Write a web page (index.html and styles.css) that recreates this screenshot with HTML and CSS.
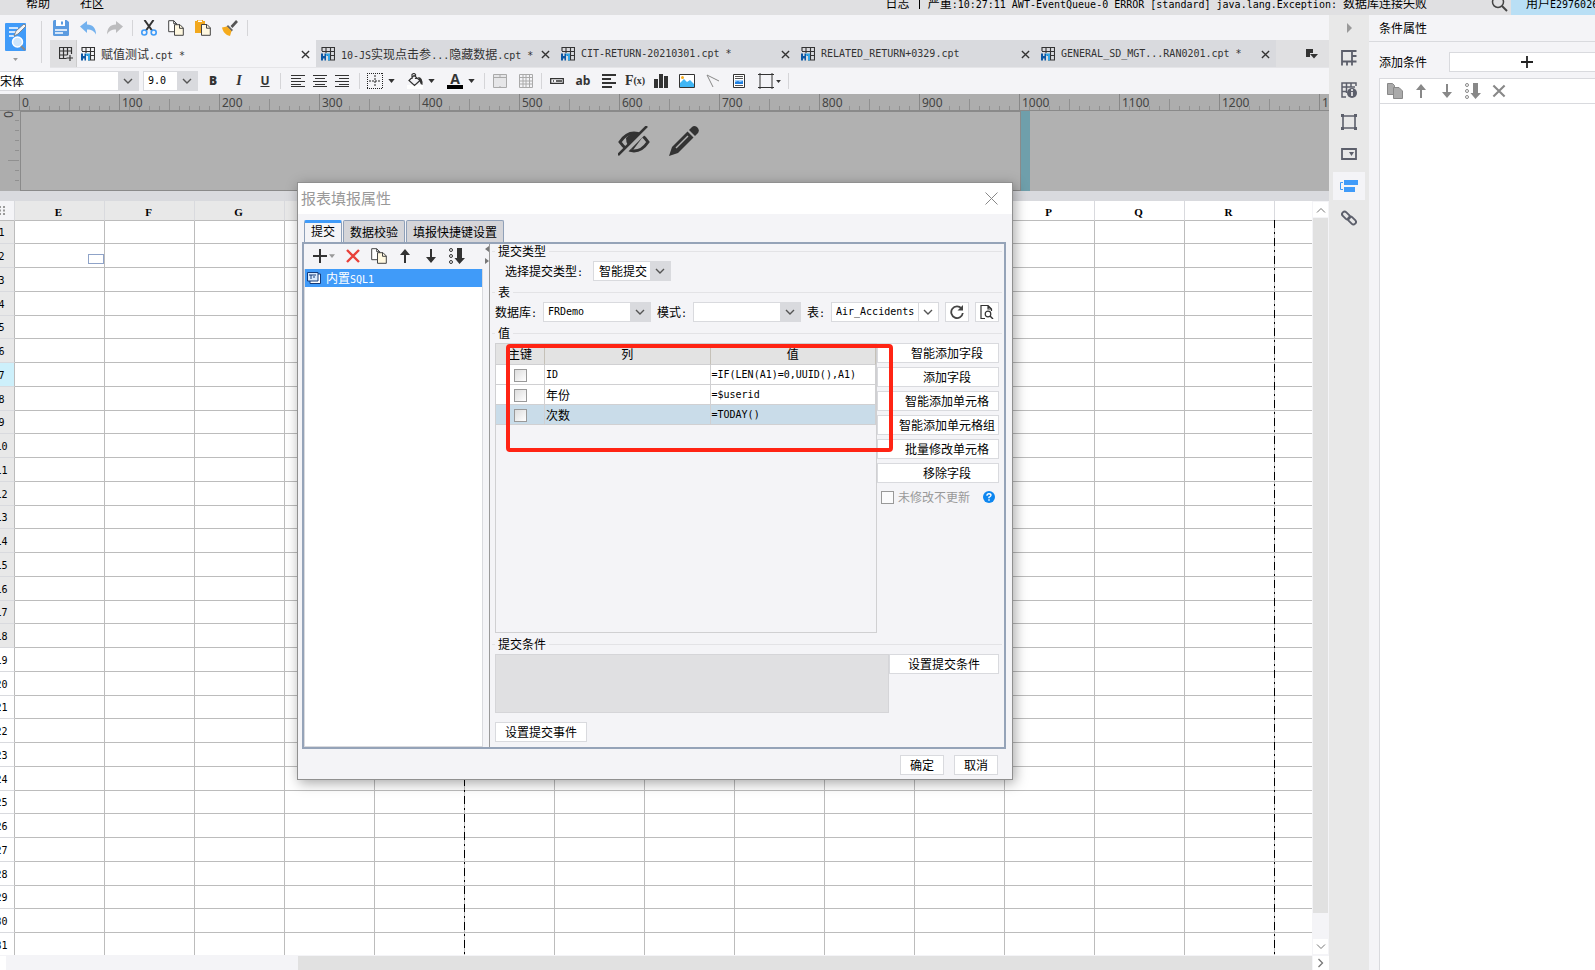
FILE: index.html
```html
<!DOCTYPE html>
<html lang="zh-CN">
<head>
  <meta charset="UTF-8">
  <meta name="viewport" content="width=device-width, initial-scale=1.0">
  <title>报表设计器</title>
  <link rel="stylesheet" href="styles.css">
</head>

<body>

  <!-- shared icons -->
  <svg class="defs" width="0" height="0">
    <symbol id="i-cpt" viewBox="0 0 14 14">
      <path d="M1 4V.5h12.500v12.500H7M1 4.500h12.500M5 .5V6M9.500 .5V13M6 8.500h7.500" fill="none" stroke="#333" stroke-width="1.100"/>
      <path d="M0 6.500h2v2.500h1.500V6.500h1.500v7H3.500v-2H2v2H0z" fill="#0b57a4"/>
      <path d="M5 6.500h4v7H7V8.700H5z" fill="#35a6e6"/>
    </symbol>
    <symbol id="i-x" viewBox="0 0 10 10"><path d="M1 1l8 8M9 1L1 9" fill="none" stroke="currentColor" stroke-width="1.500"/></symbol>
    <symbol id="i-down" viewBox="0 0 8 5"><path d="M0 0h8L4 5z" fill="currentColor"/></symbol>
    <symbol id="i-copy" viewBox="0 0 16 16">
      <path d="M.7.7h5l3 3v8H.7z" fill="#fff" stroke="#444"/>
      <path d="M5.700.7v3h3" fill="none" stroke="#444"/>
      <path d="M6.500 4.700h5.500l3.300 3.300v7.300H6.500z" fill="#fff8e0" stroke="#444"/>
      <path d="M11.500 4.700v3.600h3.800" fill="none" stroke="#444"/>
    </symbol>
    <symbol id="i-up" viewBox="0 0 10 14"><path d="M5 0l5 6H6v8H4V6H0z" fill="currentColor"/></symbol>
    <symbol id="i-dn" viewBox="0 0 10 14"><path d="M5 14l5-6H6V0H4v8H0z" fill="currentColor"/></symbol>
    <symbol id="i-sort" viewBox="0 0 16 16">
      <g fill="none" stroke="currentColor"><circle cx="2" cy="2" r="1.500"/><circle cx="2" cy="8" r="1.500"/><circle cx="2" cy="14" r="1.500"/></g>
      <path d="M8 0h5v10h3l-5.500 6L5.500 10H8z" fill="currentColor"/>
    </symbol>
  </svg>

  <header class="menubar">
    <nav class="menu">
      <a href="#">帮助</a>
      <a href="#">社区</a>
    </nav>
    <div class="log">
      <span>日志</span>
      <span class="bar"></span>
      <span class="log-text">严重<span class="lat">:10:27:11 AWT-EventQueue-0 ERROR [standard] java.lang.Exception: </span>数据库连接失败</span>
    </div>
    <button class="search" aria-label="搜索">
      <svg width="17" height="17" viewBox="0 0 17 17"><circle cx="7" cy="7" r="5.500" fill="none" stroke="#444" stroke-width="1.500"/><path d="M11 11l5 5" stroke="#444" stroke-width="2"/></svg>
    </button>
    <div class="user">用户<span class="lat">E2976026</span></div>
  </header>

  <div class="workspace">
    <main class="designer">
      <div class="top">
        <button class="preview" aria-label="预览">
          <svg width="22" height="28" viewBox="0 0 22 28">
            <rect x="0" y="0" width="21" height="28" rx="1" fill="#409bf9"/>
            <path d="M4 5h9M4 9h7M4 13h5" stroke="#fff" stroke-width="1.500"/>
            <path d="M9 13l2-5 8-7 2 2-8 8z" fill="#f3f4f6" stroke="#777" stroke-width=".8"/>
            <circle cx="12.500" cy="19" r="5" fill="#cfe6fb" stroke="#fff" stroke-width="1.500"/>
            <path d="M16 23l4 4" stroke="#888" stroke-width="2"/>
          </svg>
          <svg class="tri" width="5" height="3"><use href="#i-down"/></svg>
        </button>

        <div class="top-rows">
          <div class="quick">
            <button aria-label="保存"><svg width="16" height="16" viewBox="0 0 16 16"><path d="M0 1.500Q0 0 1.500 0h12L16 2v12.500q0 1.500-1.500 1.500h-13Q0 16 0 14.500z" fill="#5b9be0"/><path d="M3 0h9v6H3z" fill="#fff"/><path d="M8 1.500h2v3H8z" fill="#5b9be0"/><path d="M2 10h12M2 13h8" stroke="#fff" stroke-width="1.300"/></svg></button>
            <button aria-label="撤销"><svg width="16" height="16" viewBox="0 0 16 16"><path d="M0 6.500L7 1v3.500c6 0 9 4 9 10-2-3.500-4-5-9-5V13z" fill="#73b1ee"/></svg></button>
            <button aria-label="重做"><svg width="16" height="16" viewBox="0 0 16 16"><path d="M16 6.500L9 1v3.500c-6 0-9 4-9 10 2-3.500 4-5 9-5V13z" fill="#bcbcbe"/></svg></button>
            <i class="sep"></i>
            <button aria-label="剪切"><svg width="16" height="16" viewBox="0 0 16 16"><path d="M3.500 0L11 10.500M12.500 0L5 10.500" stroke="#333" stroke-width="2"/><circle cx="3.300" cy="12.500" r="2.500" fill="none" stroke="#3f9bf7" stroke-width="1.600"/><circle cx="12.700" cy="12.500" r="2.500" fill="none" stroke="#3f9bf7" stroke-width="1.600"/></svg></button>
            <button aria-label="复制"><svg width="16" height="16"><use href="#i-copy"/></svg></button>
            <button aria-label="粘贴"><svg width="16" height="16" viewBox="0 0 16 16"><path d="M0 1h10v12H0z" fill="#f2a81d"/><path d="M2.500 0h5v2.500h-5z" fill="#fff" stroke="#f2a81d"/><path d="M6.500 4.500h5.500l3.300 3.300v7.500H6.500z" fill="#fff8e0" stroke="#444"/><path d="M11.500 4.500v3.700h3.800" fill="none" stroke="#444"/></svg></button>
            <button aria-label="格式刷"><svg width="16" height="16" viewBox="0 0 16 16"><path d="M15 1L9.500 7" stroke="#555" stroke-width="2.600"/><path d="M6 5l5 5-1.500 1.500-5-5z" fill="#666"/><path d="M0 7.500l5-1 4.500 4.500L8 16C3.500 15 1 12 0 7.500z" fill="#f6ab1c"/></svg></button>
            <i class="sep"></i>
          </div>

          <div class="tabs">
            <button class="tab-new" aria-label="新建"><svg width="14" height="14" viewBox="0 0 14 14"><path d="M7.500 11.500H.5V.5h12V7M.5 4h12M.5 8h8M4.500 .5v11M8.500 .5V8M7.500 11h6.500M11 8v6" fill="none" stroke="#333" stroke-width="1.200"/></svg></button>
            <div class="tab active"><svg width="14" height="14"><use href="#i-cpt"/></svg><span class="name">赋值测试<span class="lat">.cpt *</span></span><button aria-label="关闭"><svg width="9" height="9"><use href="#i-x"/></svg></button></div>
            <div class="tab"><svg width="14" height="14"><use href="#i-cpt"/></svg><span class="name"><span class="lat">10-JS</span>实现点击参<span class="lat">...</span>隐藏数据<span class="lat">.cpt *</span></span><button aria-label="关闭"><svg width="9" height="9"><use href="#i-x"/></svg></button></div>
            <div class="tab"><svg width="14" height="14"><use href="#i-cpt"/></svg><span class="name lat">CIT-RETURN-20210301.cpt *</span><button aria-label="关闭"><svg width="9" height="9"><use href="#i-x"/></svg></button></div>
            <div class="tab"><svg width="14" height="14"><use href="#i-cpt"/></svg><span class="name lat">RELATED_RETURN+0329.cpt</span><button aria-label="关闭"><svg width="9" height="9"><use href="#i-x"/></svg></button></div>
            <div class="tab"><svg width="14" height="14"><use href="#i-cpt"/></svg><span class="name lat">GENERAL_SD_MGT...RAN0201.cpt *</span><button aria-label="关闭"><svg width="9" height="9"><use href="#i-x"/></svg></button></div>
            <button class="tab-list" aria-label="全部标签"><svg width="12" height="10" viewBox="0 0 12 10"><path d="M0 0h7v4H4v4H0zM4 5h8L8 9.500z" fill="#333"/></svg></button>
          </div>
        </div>
      </div>

      <div class="format">
        <select class="combo font-name" aria-label="字体"><option>宋体</option></select>
        <select class="combo lat font-size" aria-label="字号"><option>9.0</option></select>
        <button class="bold" aria-label="加粗">B</button>
        <button class="italic" aria-label="倾斜">I</button>
        <button class="under" aria-label="下划线">U</button>
        <i class="sep"></i>
        <div class="aligns">
          <button aria-label="左对齐"><svg width="14" height="12" viewBox="0 0 14 12"><path d="M0 .5h14M0 3.500h10M0 6.500h14M0 9.500h10M0 11.500h14" stroke="#333"/></svg></button>
          <button aria-label="居中"><svg width="14" height="12" viewBox="0 0 14 12"><path d="M0 .5h14M2 3.500h10M0 6.500h14M2 9.500h10M0 11.500h14" stroke="#333"/></svg></button>
          <button aria-label="右对齐"><svg width="14" height="12" viewBox="0 0 14 12"><path d="M0 .5h14M4 3.500h10M0 6.500h14M4 9.500h10M0 11.500h14" stroke="#333"/></svg></button>
        </div>
        <i class="sep"></i>
        <button class="drop" aria-label="边框"><svg width="16" height="16" viewBox="0 0 16 16"><path d="M.5 0v16M15.500 0v16M0 .5h16M0 15.500h16" stroke="#222" stroke-dasharray="1 1"/><path d="M8 2v12M2 8h12" stroke="#222" stroke-dasharray="2 1"/></svg><svg width="7" height="4"><use href="#i-down"/></svg></button>
        <button class="drop" aria-label="填充"><svg width="16" height="16" viewBox="0 0 16 16"><path d="M0 12h16v4H0z" fill="#fff"/><path d="M7 2.500l6 5-5.500 5L2 7.500zM5 6V1.500q2-2 3.500 0V6" fill="none" stroke="#333" stroke-width="1.200"/><path d="M11 4q5 0 4.500 8-2.500-1-3-4z" fill="#333"/></svg><svg width="7" height="4"><use href="#i-down"/></svg></button>
        <button class="drop" aria-label="字体颜色"><span class="color-a">A</span><svg width="7" height="4"><use href="#i-down"/></svg></button>
        <i class="sep"></i>
        <button aria-label="合并"><svg width="14" height="14" viewBox="0 0 14 14"><path d="M.5.5h13v13H.5zM.5 3.500h13M7 .5v3M7 12v1.500" fill="#e6e6e8" stroke="#aaa"/></svg></button>
        <button aria-label="拆分"><svg width="14" height="14" viewBox="0 0 14 14"><path d="M.5.5h13v13H.5zM.5 3.500h13M.5 7h13M.5 10h13M4 .5v13M7 .5v13M10.500 .5v13" fill="none" stroke="#aaa"/></svg></button>
        <i class="sep"></i>
        <button aria-label="控件"><svg width="14" height="6" viewBox="0 0 14 6"><path d="M.7.7h12.600v4.600H.7zM3 3h1M6 3h6" fill="none" stroke="#333" stroke-width="1.300"/></svg></button>
        <button class="ab" aria-label="文本">ab</button>
        <button aria-label="富文本"><svg width="14" height="14" viewBox="0 0 14 14"><path d="M0 1h14M0 5h9M0 9h14M0 13h10" stroke="#333" stroke-width="2"/></svg></button>
        <button class="fx" aria-label="公式">F<small>(x)</small></button>
        <button aria-label="图表"><svg width="14" height="14" viewBox="0 0 14 14"><path d="M0 5h4v9H0zM5 0h4v14H5zM10 2h4v12h-4z" fill="#333"/></svg></button>
        <button aria-label="图片"><svg width="16" height="14" viewBox="0 0 16 14"><path d="M.5.5h15v13H.5z" fill="#fff" stroke="#333"/><path d="M1 13V9l4-4 3 3 3-2 4 4v3z" fill="#3fb6f5"/><circle cx="3.500" cy="3.500" r="1.500" fill="#f6ab1c"/></svg></button>
        <button aria-label="斜线"><svg width="14" height="14" viewBox="0 0 14 14"><path d="M13 7L1 1l6 12" fill="none" stroke="#888"/></svg></button>
        <button aria-label="子报表"><svg width="12" height="14" viewBox="0 0 12 14"><path d="M.5.5h11v13H.5z" fill="#fff" stroke="#333"/><path d="M2 2.500h8M2 4.500h8M2 11.500h8" stroke="#555"/><path d="M2 6h8v4H2z" fill="#9fd0fb"/><path d="M2 10V8l3-1 2 1 3-1v3z" fill="#1f7fe0"/></svg></button>
        <button class="shape" aria-label="形状"><svg width="16" height="16" viewBox="0 0 16 16"><path d="M2 0v16M14 0v16M0 1.500h16M0 14.500h16" stroke="#333"/></svg><svg width="5" height="3"><use href="#i-down"/></svg></button>
        <i class="sep"></i>
      </div>

      <div class="ruler-top" id="ruler"></div>

      <div class="param">
        <div class="ruler-left"><span>0</span></div>
        <div class="canvas">
          <svg width="32" height="30" viewBox="0 0 32 30"><path d="M2 16Q8 7 16 7t14 9q-6 9-14 9T2 16z" fill="none" stroke="#333" stroke-width="3"/><path d="M8 12q8-9 16 0l-9 12q-7-4-7-12z" fill="#333"/><path d="M2 31L33 0" stroke="#b1b1b1" stroke-width="4"/><path d="M0 29L29 0" stroke="#333" stroke-width="2.500"/></svg>
          <svg width="30" height="30" viewBox="0 0 30 30"><path d="M20 4l6 6 3-3q2-3-1-6-3-2-5 0z" fill="#333"/><path d="M18.500 5.500l6 6L9 27l-9 3 3-9z" fill="#333"/><path d="M7 22L19 10" stroke="#b1b1b1" stroke-width="1.500"/></svg>
        </div>
        <div class="drag"></div>
      </div>
      <div class="splitter"></div>

      <div class="sheet-area">
        <div class="sheet">
          <table class="grid" id="grid"></table>
          <span class="cell-mark"></span>
          <span class="page-line first"></span>
          <span class="page-line second"></span>
        </div>
        <div class="vscroll">
          <button aria-label="向上"><svg width="10" height="6" viewBox="0 0 10 6"><path d="M1 5.500l4-4 4 4" fill="none" stroke="#777"/></svg></button>
          <div class="thumb"></div>
          <button aria-label="向下"><svg width="10" height="6" viewBox="0 0 10 6"><path d="M1 .5l4 4 4-4" fill="none" stroke="#777"/></svg></button>
        </div>
      </div>
      <div class="hscroll">
        <button class="left" aria-label="向左"></button>
        <div class="thumb"></div>
        <button aria-label="向右"><svg width="6" height="10" viewBox="0 0 6 10"><path d="M.5 1l4 4-4 4" fill="none" stroke="#777" stroke-width="1.300"/></svg></button>
      </div>
    </main>

    <nav class="strip">
      <button aria-label="收起"><svg width="6" height="10" viewBox="0 0 6 10"><path d="M1 0l5 5-5 5z" fill="#999"/></svg></button>
      <button aria-label="单元格元素"><svg width="16" height="16" viewBox="0 0 16 16"><path d="M1 15.500V1h14.500M1 11.500h14.500M11 1v14.500M11 6h4.500M6 11.500v4" fill="none" stroke="#5c5f6b" stroke-width="1.800"/></svg></button>
      <button aria-label="单元格属性"><svg width="16" height="16" viewBox="0 0 16 16"><path d="M5 15H1V1h14v3M1 5h13M1 9.500h5M5.500 1v10M10 1v4" fill="none" stroke="#5c5f6b" stroke-width="1.500"/><circle cx="11" cy="11" r="5" fill="#5c5f6b"/><path d="M11 7v2M11 10v4" stroke="#fff" stroke-width="1.500"/></svg></button>
      <button aria-label="悬浮元素"><svg width="16" height="16" viewBox="0 0 16 16"><path d="M2 2h12v12H2z" fill="none" stroke="#5c5f6b" stroke-width="1.600"/><path d="M0 0h3v3H0zM13 0h3v3h-3zM0 13h3v3H0zM13 13h3v3h-3z" fill="#5c5f6b"/></svg></button>
      <button aria-label="控件设置"><svg width="16" height="12" viewBox="0 0 16 12"><path d="M1 1h14v10H1z" fill="none" stroke="#5c5f6b" stroke-width="1.800"/><path d="M8 4h5l-2.500 4z" fill="#5c5f6b"/></svg></button>
      <button class="on" aria-label="条件属性"><svg width="18" height="12" viewBox="0 0 18 12"><path d="M4 0h14v5H4zM4 7h11v5H4z" fill="#409bf9"/><path d="M3 2.500H.5v7H3" fill="none" stroke="#409bf9"/></svg></button>
      <button aria-label="超级链接"><svg width="16" height="16" viewBox="0 0 16 16"><g fill="none" stroke="#5c5f6b" stroke-width="1.900"><rect x="0.500" y="3" width="9" height="5" rx="2.500" transform="rotate(45 5 5.500)"/><rect x="6.500" y="8" width="9" height="5" rx="2.500" transform="rotate(45 11 10.500)"/></g></svg></button>
    </nav>

    <aside class="panel">
      <h2>条件属性</h2>
      <div class="panel-row">
        <span>添加条件</span>
        <button aria-label="添加条件"><svg width="12" height="12" viewBox="0 0 12 12"><path d="M6 0v12M0 6h12" stroke="#222" stroke-width="1.800"/></svg></button>
      </div>
      <div class="cond-list">
        <div class="cond-tools">
          <button aria-label="复制"><svg width="16" height="16" viewBox="0 0 16 16"><path d="M.5.5h5l2 2v9h-7z" fill="#aaa" stroke="#888"/><path d="M6.500 4.500h5.500l3.500 3.500v7.500h-9z" fill="#aaa" stroke="#888"/></svg></button>
          <button aria-label="上移"><svg width="10" height="14"><use href="#i-up"/></svg></button>
          <button aria-label="下移"><svg width="10" height="14"><use href="#i-dn"/></svg></button>
          <button aria-label="排序"><svg width="16" height="16"><use href="#i-sort"/></svg></button>
          <button aria-label="删除"><svg width="14" height="14"><use href="#i-x"/></svg></button>
        </div>
      </div>
    </aside>
  </div>

  <section class="dialog" role="dialog" aria-labelledby="dialogTitle">
    <div class="dialog-title">
      <h1 id="dialogTitle">报表填报属性</h1>
      <button aria-label="关闭"><svg width="13" height="13" viewBox="0 0 13 13"><path d="M.5.5l12 12M12.500 .5l-12 12" stroke="#888"/></svg></button>
    </div>
    <div class="dialog-tabs">
      <button class="active">提交</button>
      <button>数据校验</button>
      <button>填报快捷键设置</button>
    </div>

    <div class="pane">
      <div class="side">
        <div class="side-tools">
          <button class="add" aria-label="添加"><svg width="14" height="14" viewBox="0 0 14 14"><path d="M7 0v14M0 7h14" stroke="#333" stroke-width="2"/></svg><svg class="tri" width="6" height="4"><use href="#i-down"/></svg></button>
          <button aria-label="删除"><svg width="14" height="14" viewBox="0 0 14 14"><path d="M1 1l12 12M13 1L1 13" stroke="#e8403a" stroke-width="2.400"/></svg></button>
          <button aria-label="复制"><svg width="16" height="16"><use href="#i-copy"/></svg></button>
          <button aria-label="上移"><svg width="10" height="14"><use href="#i-up"/></svg></button>
          <button aria-label="下移"><svg width="10" height="14"><use href="#i-dn"/></svg></button>
          <button aria-label="排序"><svg width="16" height="16"><use href="#i-sort"/></svg></button>
        </div>
        <ul class="submit-list">
          <li><svg width="14" height="12" viewBox="0 0 14 12"><path d="M3 2h10.500v9.500H3z" fill="#fff" stroke="#143a78"/><path d="M.5.5h10.500v8.500H.5z" fill="#d9eafc" stroke="#143a78"/><path d="M2 3h7M4 3v4M6 5h2" stroke="#143a78"/></svg><span>内置<span class="lat">SQL1</span></span></li>
        </ul>
      </div>
      <div class="split">
        <svg width="4" height="18" viewBox="0 0 4 18"><path d="M4 0v6L0 3zM0 12v6l4-3z" fill="#777"/></svg>
      </div>

      <form class="detail">
        <fieldset>
          <legend>提交类型</legend>
          <div class="row type-row">
            <label for="submitType">选择提交类型<span class="lat">:</span></label>
            <select class="combo" id="submitType"><option>智能提交</option></select>
          </div>
        </fieldset>

        <fieldset>
          <legend>表</legend>
          <div class="row">
            <label class="l-db" for="db">数据库<span class="lat">:</span></label>
            <select class="combo lat source" id="db"><option>FRDemo</option></select>
            <label class="l-schema" for="schema">模式<span class="lat">:</span></label>
            <select class="combo source" id="schema"><option></option></select>
            <label class="l-table" for="tableName">表<span class="lat">:</span></label>
            <select class="combo lat source plain" id="tableName"><option>Air_Accidents</option></select>
            <button type="button" class="btn icon" aria-label="刷新"><svg width="14" height="14" viewBox="0 0 14 14"><path d="M11.500 3.500A5.800 5.800 0 1 0 12.800 8" fill="none" stroke="#444" stroke-width="1.800"/><path d="M13 0v5.500H7.500z" fill="#444"/></svg></button>
            <button type="button" class="btn icon" aria-label="预览表"><svg width="14" height="14" viewBox="0 0 14 14"><path d="M5 13.500H1V.5h7l3.500 3.500v2M8 .5v3.500h3.500" fill="none" stroke="#333" stroke-width="1.200"/><circle cx="8" cy="9" r="2.800" fill="none" stroke="#333" stroke-width="1.200"/><path d="M10 11l3 3" stroke="#333" stroke-width="1.400"/></svg></button>
          </div>
        </fieldset>

        <fieldset>
          <legend>值</legend>
          <div class="values">
            <div class="value-box">
              <table class="value-table">
                <thead>
                  <tr><th class="key">主键</th><th>列</th><th>值</th></tr>
                </thead>
                <tbody>
                  <tr><td class="key"><input type="checkbox" aria-label="主键 ID"></td><td class="lat">ID</td><td class="lat">=IF(LEN(A1)=0,UUID(),A1)</td></tr>
                  <tr><td class="key"><input type="checkbox" aria-label="主键 年份"></td><td>年份</td><td class="lat">=$userid</td></tr>
                  <tr class="selected"><td class="key"><input type="checkbox" aria-label="主键 次数"></td><td>次数</td><td class="lat">=TODAY()</td></tr>
                </tbody>
              </table>
            </div>
            <div class="value-actions">
              <button type="button" class="btn">智能添加字段</button>
              <button type="button" class="btn">添加字段</button>
              <button type="button" class="btn">智能添加单元格</button>
              <button type="button" class="btn">智能添加单元格组</button>
              <button type="button" class="btn">批量修改单元格</button>
              <button type="button" class="btn">移除字段</button>
              <div class="skip">
                <input type="checkbox" id="skip"><label for="skip">未修改不更新</label>
                <svg width="12" height="12" viewBox="0 0 12 12"><circle cx="6" cy="6" r="6" fill="#0d86f0"/><path d="M4 4.700q0-2 2-2t2 1.600q0 1-2 2v1M6 8.300v1.500" fill="none" stroke="#fff" stroke-width="1.400"/></svg>
              </div>
            </div>
            <div class="highlight"></div>
          </div>
        </fieldset>

        <fieldset>
          <legend>提交条件</legend>
          <div class="condition">
            <textarea aria-label="提交条件" disabled></textarea>
            <button type="button" class="btn">设置提交条件</button>
          </div>
        </fieldset>
        <button type="button" class="btn event">设置提交事件</button>
      </form>
    </div>

    <div class="dialog-foot">
      <button class="btn">确定</button>
      <button class="btn">取消</button>
    </div>
  </section>

  <script src="app.js"></script>
</body>
</html>
```
FILE: styles.css
```css
* {
  box-sizing: border-box;
  margin: 0;
  padding: 0;
}

body {
  height: 100vh;
  display: flex;
  flex-direction: column;
  position: relative;
  overflow: hidden;
  font-family: "Noto Sans CJK SC", sans-serif;
  font-size: 12px;
  line-height: 14px;
  color: #000;
  background-color: #f4f4f7;
}

button,
select,
input,
textarea {
  font: inherit;
  color: inherit;
}

button {
  border: none;
  background: none;
  display: flex;
  align-items: center;
  justify-content: center;
  flex-shrink: 0;
}

svg {
  display: block;
  flex-shrink: 0;
}

.defs {
  position: absolute;
}

.lat {
  font-family: "DejaVu Sans Mono", "Noto Sans CJK SC", monospace;
  font-size: 10px;
  line-height: 10px;
  white-space: pre;
}

td.lat,
select.lat,
.name.lat {
  line-height: 14px;
}

.sep {
  width: 1px;
  height: 16px;
  background-color: #d5d5d8;
  flex-shrink: 0;
}

/* menu bar */
.menubar {
  height: 15px;
  flex-shrink: 0;
  display: flex;
  align-items: flex-end;
  overflow: hidden;
  background-color: #e0e0e2;
  white-space: nowrap;
}

.menu {
  flex: 1;
  display: flex;
  gap: 30px;
  padding: 0 0 5px 26px;
}

.menu a {
  color: #000;
  text-decoration: none;
}

.log {
  display: flex;
  align-items: center;
  padding-bottom: 5px;
}

.bar {
  width: 1px;
  height: 12px;
  margin: 0 8px 0 9px;
  background-color: #000;
}

.search {
  width: 84px;
  padding: 0 2px 3px 62px;
}

.user {
  width: 84px;
  height: 15px;
  padding-left: 15px;
  line-height: 6px;
  background-color: #b9dff5;
}

/* layout */
.workspace {
  flex: 1;
  min-height: 0;
  display: flex;
}

.designer {
  flex: 1;
  min-width: 0;
  display: flex;
  flex-direction: column;
}

.top {
  display: flex;
}

.preview {
  width: 42px;
  height: 42px;
  margin: 6px 8px 0 0;
  padding-right: 10px;
  flex-direction: column;
  gap: 7px;
  border-right: 1px solid #d5d5d8;
}

.tri {
  color: #999;
}

.top-rows {
  flex: 1;
  min-width: 0;
}

.quick {
  height: 25px;
  display: flex;
  align-items: center;
  gap: 11px;
  padding-left: 3px;
}

.quick .sep {
  margin: 0 -3px 0 -2px;
}

/* document tabs */
.tabs {
  height: 28px;
  display: flex;
  background-color: #e0e0e2;
  border-bottom: 1px solid #e5e5e8;
  color: #333;
}

.tab-new {
  width: 27px;
  padding: 1px 0 0 5px;
  border-right: 1px solid #ccc;
  background-color: #dfdfe1;
}

.tab {
  width: 240px;
  display: flex;
  align-items: center;
  gap: 6px;
  padding: 1px 6px 0 5px;
  background-color: #d9dade;
  white-space: nowrap;
}

.tab.active {
  width: 239px;
  padding-left: 4px;
  background-color: #f4f4f7;
}

.name {
  flex: 1;
}

.tab-list {
  width: 12px;
  margin-left: 30px;
}

/* format bar */
.format {
  height: 26px;
  display: flex;
  align-items: center;
  gap: 8px;
  color: #333;
}

.format button {
  width: 18px;
}

.combo {
  height: 20px;
  padding: 0 20px 0 4px;
  flex-shrink: 0;
  appearance: none;
  border: 1px solid #d9dade;
  border-radius: 0;
  color: #000;
  background: #fff url("data:image/svg+xml,%3Csvg xmlns='http://www.w3.org/2000/svg' width='20' height='20'%3E%3Cpath fill='%23d9dade' d='M0 0h20v20H0z'/%3E%3Cpath d='M6 8l4 4 4-4' fill='none' stroke='%23555' stroke-width='1.400'/%3E%3C/svg%3E") right center no-repeat;
}

.combo.plain {
  background-image: url("data:image/svg+xml,%3Csvg xmlns='http://www.w3.org/2000/svg' width='20' height='20'%3E%3Cpath fill='%23d9dade' d='M0 0h1v20H0z'/%3E%3Cpath d='M6 8l4 4 4-4' fill='none' stroke='%23555' stroke-width='1.400'/%3E%3C/svg%3E");
}

.font-name {
  width: 139px;
  padding-left: 0;
  border-left: none;
  margin-right: -4px;
}

.font-size {
  width: 55px;
  margin-right: -2px;
}

.bold,
.under,
.ab {
  font-family: "Open Sans", sans-serif;
  font-size: 12px;
  font-weight: bold;
}

.bold {
  font-weight: 800;
}

.italic {
  font-family: "Liberation Serif", serif;
  font-size: 14px;
  font-style: italic;
  font-weight: bold;
}

.under {
  text-decoration: underline;
}

.format .sep {
  margin: 0 -2px;
}

.aligns {
  display: flex;
}

.format .aligns button {
  width: 22px;
}

.format .drop {
  width: 30px;
  gap: 5px;
  margin-right: 2px;
}

.color-a {
  width: 16px;
  height: 16px;
  border-bottom: 4px solid #000;
  font-family: "Open Sans", sans-serif;
  font-size: 14px;
  font-weight: bold;
  line-height: 11px;
}

.fx {
  font-family: "Liberation Serif", serif;
  font-size: 14px;
  font-weight: bold;
}

.fx small {
  font-size: 10px;
}

.format .shape {
  width: 26px;
  gap: 2px;
}

/* rulers and parameter pane */
.ruler-top {
  height: 17px;
  flex-shrink: 0;
  display: flex;
  padding-left: 19px;
  overflow: hidden;
  border-bottom: 1px solid #8a8a8a;
  background-color: #adadad;
}

.ruler-top span {
  width: 100px;
  height: 16px;
  flex-shrink: 0;
  padding-left: 2px;
  border-left: 1px solid #888;
  font-family: "Noto Sans", sans-serif;
  font-size: 12px;
  line-height: 17px;
  color: #444;
  background:
    linear-gradient(#909090, #909090) 49px 5px / 1px 11px no-repeat,
    repeating-linear-gradient(to right, transparent 0 9px, #909090 9px 10px) 0 12px / 99px 4px no-repeat;
}

.param {
  height: 80px;
  flex-shrink: 0;
  display: flex;
  background-color: #b1b1b1;
}

.ruler-left {
  width: 20px;
  background:
    linear-gradient(#909090, #909090) 8px 49px / 11px 1px no-repeat,
    repeating-linear-gradient(transparent 0 9px, #909090 9px 10px) 15px 0 / 4px 79px no-repeat,
    #adadad;
}

.ruler-left span {
  display: block;
  width: 14px;
  margin-left: 2px;
  font-family: "Noto Sans", sans-serif;
  line-height: 12px;
  writing-mode: vertical-lr;
  color: #444;
}

.canvas {
  width: 1001px;
  display: flex;
  justify-content: center;
  gap: 19px;
  padding: 14px 0 0 276px;
  border: 1px solid #8a8a8a;
}

.drag {
  width: 9px;
  background-color: #6f9fab;
}

.splitter {
  height: 10px;
  flex-shrink: 0;
  background-color: #d9dade;
}

/* sheet */
.sheet-area {
  flex: 1;
  min-height: 0;
  display: flex;
}

.sheet {
  flex: 1;
  min-width: 0;
  position: relative;
  overflow: hidden;
  background-color: #fff;
}

.grid {
  width: calc(100% + 13px);
  margin-left: -13px;
  table-layout: fixed;
  border-spacing: 0;
  font-family: "Liberation Serif", serif;
  font-size: 12px;
}

.grid th {
  font-weight: normal;
  line-height: 14px;
  border-right: 1px solid #d9dade;
  border-bottom: 1px solid #d9dade;
}

.grid thead th {
  height: 20px;
  padding: 2px 2px 0 0;
  border-bottom-color: #bcbcbc;
  font-size: 11px;
  font-weight: bold;
}

.grid thead .corner {
  width: 28px;
  padding: 0 0 0 12px;
  background-color: #f4f4f7;
}

.grid .col {
  width: 90px;
}

.grid tbody th {
  padding: 2px 0 0 2px;
  border-right-color: #bcbcbc;
  font-family: "DejaVu Sans Mono", monospace;
  font-size: 10px;
}

.grid .used {
  background-color: #e8e8e8;
}

.grid .current {
  background-color: #cdf0fb;
}

.grid td {
  height: 24px;
  border-right: 1px solid #bcbcbc;
  border-bottom: 1px solid #bcbcbc;
}

.grid tr:nth-child(4n+1) td {
  height: 23px;
}

.grid .rest {
  border-right: none;
}

.cell-mark {
  position: absolute;
  left: 88px;
  top: 53px;
  width: 16px;
  height: 10px;
  border: 1px solid #8fa3c8;
  background-color: #fff;
}

.page-line {
  position: absolute;
  top: 19px;
  bottom: 0;
  width: 1px;
  background: repeating-linear-gradient(#000 0 8px, #bcbcbc 8px 12px, #000 12px 14px, #bcbcbc 14px 18px);
}

.page-line.first {
  left: 464px;
}

.page-line.second {
  left: 1274px;
}

.vscroll {
  width: 17px;
  display: flex;
  flex-direction: column;
  padding: 1px;
  background-color: #f4f4f7;
}

.vscroll button {
  height: 15px;
  background-color: #fff;
}

.vscroll .thumb {
  flex: 1;
  margin: 1px 0 26px;
  background-color: #e1e1e1;
}

.hscroll {
  height: 15px;
  flex-shrink: 0;
  display: flex;
  padding-top: 1px;
  background-color: #f4f4f7;
}

.hscroll button {
  width: 16px;
  background-color: #fff;
}

.hscroll .left {
  width: 6px;
}

.hscroll .thumb {
  flex: 1;
  margin: 0 1px 0 292px;
  background-color: #e1e1e1;
}

/* right tool strip */
.strip {
  width: 40px;
  display: flex;
  flex-direction: column;
  align-items: center;
  gap: 4px;
  background-color: #e8e8e8;
}

.strip button {
  width: 32px;
  height: 28px;
}

.strip button:first-child {
  height: 25px;
}

.strip .on {
  background-color: #f4f4f7;
}

/* property panel */
.panel {
  width: 226px;
  display: flex;
  flex-direction: column;
  overflow: hidden;
}

.panel h2 {
  height: 27px;
  padding-left: 10px;
  border-bottom: 1px solid #d9dade;
  font-size: 12px;
  font-weight: normal;
  line-height: 26px;
}

.panel-row {
  display: flex;
  align-items: center;
  justify-content: space-between;
  margin: 10px -10px 6px 10px;
}

.panel-row button {
  width: 156px;
  height: 20px;
  border: 1px solid #d9dade;
  background-color: #fff;
}

.cond-list {
  flex: 1;
  margin-left: 10px;
  border: 1px solid #d9dade;
  border-width: 1px 0 0 1px;
  background-color: #fff;
}

.cond-tools {
  height: 25px;
  display: flex;
  align-items: center;
  gap: 10px;
  padding-left: 7px;
  border-bottom: 1px solid #d9dade;
  color: #888;
}

.cond-tools button,
.side-tools button {
  width: 16px;
}

/* dialog */
.dialog {
  position: absolute;
  left: 297px;
  top: 182px;
  width: 716px;
  border: 1px solid #909090;
  background-color: #f4f4f7;
  box-shadow: 2px 3px 12px rgba(0, 0, 0, 0.35);
}

.dialog-title {
  height: 31px;
  display: flex;
  align-items: center;
  justify-content: space-between;
  padding: 0 14px 1px 3px;
  background-color: #fff;
}

.dialog-title h1 {
  font-size: 15px;
  font-weight: normal;
  line-height: 16px;
  color: #999;
}

.dialog-tabs {
  height: 28px;
  display: flex;
  gap: 1px;
  padding: 6px 0 0 6px;
}

.dialog-tabs button {
  padding: 1px 6px 0;
  border: 1px solid #8fa0b8;
  border-bottom: none;
  border-radius: 2px 2px 0 0;
  background-color: #d5d5d9;
}

.dialog-tabs .active {
  padding: 0 6px 4px;
  border-top: 3px solid #409bf9;
  background-color: #f4f4f7;
}

.pane {
  height: 507px;
  display: flex;
  margin: 0 6px 0 4px;
  border: 2px solid #95a3b8;
}

.side {
  width: 179px;
  flex-shrink: 0;
  display: flex;
  flex-direction: column;
}

.side-tools {
  height: 25px;
  display: flex;
  align-items: center;
  gap: 10px;
  padding: 0 0 2px 8px;
  color: #333;
}

.side-tools .add {
  width: 23px;
  gap: 2px;
}

.submit-list {
  flex: 1;
  border: 1px solid #d9dade;
  border-top: none;
  background-color: #fff;
  list-style: none;
}

.submit-list li {
  height: 18px;
  display: flex;
  align-items: center;
  gap: 5px;
  padding-left: 2px;
  color: #fff;
  background-color: #409bf9;
}

.split {
  width: 7px;
  flex-shrink: 0;
  padding: 2px 0 0 2px;
  border-right: 1px solid #999;
}

.detail {
  flex: 1;
  min-width: 0;
  padding: 0 2px;
}

fieldset {
  min-width: 0;
  padding: 3px 3px 4px;
  border: none;
  border-top: 1px solid #e3e3e6;
}

legend {
  padding: 0 3px;
}

.row {
  display: flex;
  align-items: center;
}

.row label {
  flex-shrink: 0;
}

.type-row {
  gap: 10px;
  padding-left: 10px;
}

.type-row .combo {
  width: 78px;
  padding-left: 5px;
}

.l-db {
  width: 48px;
}

.l-schema {
  width: 36px;
}

.l-table {
  width: 24px;
}

.source {
  width: 108px;
  margin-right: 6px;
}

.btn {
  height: 20px;
  padding: 0 8px;
  border: 1px solid #d9dade;
  background-color: #fff;
  white-space: nowrap;
}

.icon {
  width: 24px;
  padding: 0;
}

.icon + .icon {
  margin-left: 6px;
}

.values {
  display: flex;
  position: relative;
}

.value-box {
  flex: 1;
  height: 290px;
  border: 1px solid #d0d0d2;
}

.value-table {
  width: 100%;
  table-layout: fixed;
  border-spacing: 0;
}

.value-table th {
  height: 21px;
  border-right: 1px solid #c5c1b8;
  border-bottom: 1px solid #d0d0d2;
  font-weight: normal;
  background-color: #e3e3e3;
}

.value-table td {
  height: 20px;
  padding-left: 1px;
  border-right: 1px solid #d0d0d2;
  border-bottom: 1px solid #d0d0d2;
  background-color: #fff;
}

.value-table .selected td {
  background-color: #c9dce9;
}

.value-table .key {
  width: 49px;
  padding: 0;
  text-align: center;
}

input[type="checkbox"] {
  width: 13px;
  height: 13px;
  appearance: none;
  border: 1px solid #999;
  background: linear-gradient(135deg, #ddd, #fff);
  vertical-align: middle;
}

.value-actions {
  width: 122px;
  display: flex;
  flex-direction: column;
  gap: 4px;
}

.value-actions .btn {
  padding: 0 0 0 18px;
}

.skip {
  height: 20px;
  display: flex;
  align-items: center;
  padding-left: 4px;
  color: #999;
}

.skip input[type="checkbox"] {
  background: #fbfbfc;
}

.skip label {
  flex: 1;
  padding-left: 4px;
}

.skip svg {
  margin-right: 4px;
}

.highlight {
  position: absolute;
  left: 11px;
  top: 1px;
  width: 387px;
  height: 108px;
  border: 4px solid #ff2414;
  border-radius: 4px;
  pointer-events: none;
}

.condition {
  display: flex;
  align-items: flex-start;
}

.condition textarea {
  flex: 1;
  height: 59px;
  resize: none;
  border: 1px solid #d5d5d8;
  background-color: #e0e0e2;
}

.condition .btn {
  width: 110px;
}

.event {
  width: 92px;
  margin: 5px 0 0 3px;
}

.dialog-foot {
  display: flex;
  justify-content: flex-end;
  gap: 10px;
  padding: 6px 14px 4px;
}

.dialog-foot .btn {
  width: 44px;
}
```
FILE: app.js
```javascript
document.addEventListener("DOMContentLoaded", function () {
  const columns = "EFGHIJKLMNOPQR".split("");
  const usedColumns = "EFGHI";
  const usedRows = 18;
  const currentRow = 7;

  // ruler labels, one block per 100px
  let marks = "";
  for (let i = 0; i <= 13; i++) {
    marks += `<span>${i * 100}</span>`;
  }
  document.getElementById("ruler").innerHTML = marks;

  // column headers
  let head = `<th class="corner"><svg width="8" height="9" viewBox="0 0 8 9"><path d="M1 0v9M5 0v9" stroke="#999" stroke-width="2" stroke-dasharray="2 1.500"/></svg></th>`;
  columns.forEach(name => {
    head += `<th class="col ${usedColumns.includes(name) ? "used" : ""}">${name}</th>`;
  });
  head += `<th class="rest"></th>`;

  // rows
  let body = "";
  for (let r = 1; r <= 31; r++) {
    let cls = r <= usedRows ? "used" : "";
    if (r === currentRow) cls = "current";
    body += `<tr><th class="${cls}">${r}</th>${"<td></td>".repeat(columns.length)}<td class="rest"></td></tr>`;
  }

  document.getElementById("grid").innerHTML = `<thead><tr>${head}</tr></thead><tbody>${body}</tbody>`;
});
```
